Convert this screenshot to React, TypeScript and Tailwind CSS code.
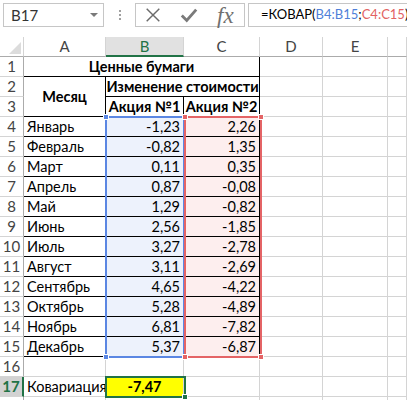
import clsx from "clsx";
import type { ReactNode } from "react";

const months = [
  "Январь",
  "Февраль",
  "Март",
  "Апрель",
  "Май",
  "Июнь",
  "Июль",
  "Август",
  "Сентябрь",
  "Октябрь",
  "Ноябрь",
  "Декабрь",
];

const stock1 = ["-1,23", "-0,82", "0,11", "0,87", "1,29", "2,56", "3,27", "3,11", "4,65", "5,28", "6,81", "5,37"];
const stock2 = ["2,26", "1,35", "0,35", "-0,08", "-0,82", "-1,85", "-2,78", "-2,69", "-4,22", "-4,89", "-7,82", "-6,87"];

type CellProps = {
  children?: ReactNode;
  className?: string;
  right?: "black" | "grid";
  bottom?: "black" | "grid";
};

function Cell({ children, className, right = "grid", bottom = "grid" }: CellProps) {
  return (
    <div
      className={clsx(
        "flex items-center whitespace-nowrap border-r border-b px-[3px] text-[14.5px] text-black",
        right === "black" ? "border-r-black" : "border-r-[#d4d4d4]",
        bottom === "black" ? "border-b-black" : "border-b-[#d4d4d4]",
        className
      )}
    >
      {children}
    </div>
  );
}

function RowHead({ n, active }: { n?: number; active?: boolean }) {
  return (
    <div
      className={clsx(
        "flex items-center justify-center border-b border-b-[#d4d4d4] text-[15px]",
        active
          ? "border-r-2 border-r-[#217346] bg-[#d2d2d2] font-bold text-[#217346]"
          : "border-r border-r-[#ababab] bg-white text-[#444]"
      )}
    >
      {n}
    </div>
  );
}

function ColHead({ label, active }: { label: string; active?: boolean }) {
  return (
    <div
      className={clsx(
        "flex items-center justify-center border-r border-r-[#d4d4d4] text-[15px]",
        active
          ? "border-b-2 border-b-[#217346] bg-[#e1e1e1] text-[#217346]"
          : "border-b border-b-[#ababab] bg-white text-[#444]"
      )}
    >
      {label}
    </div>
  );
}

function Tail() {
  return (
    <>
      <Cell />
      <Cell />
      <Cell />
    </>
  );
}

function Toolbar() {
  return (
    <div className="flex h-[37px] items-start bg-white pt-[3px]">
      <div className="ml-[3px] flex h-[24px] w-[101px] shrink-0 items-center justify-between border border-[#c6c6c6] pl-[7px] pr-[5px] text-[15px] text-[#333]">
        <span>B17</span>
        <span className="h-0 w-0 border-x-[4px] border-t-[4px] border-x-transparent border-t-[#7a7a7a]" />
      </div>
      <div className="flex h-[24px] w-[31px] shrink-0 flex-col items-center justify-center gap-[2px]">
        <span className="h-[2px] w-[2px] bg-[#a0a0a0]" />
        <span className="h-[2px] w-[2px] bg-[#a0a0a0]" />
        <span className="h-[2px] w-[2px] bg-[#a0a0a0]" />
      </div>
      <div className="flex h-[24px] w-[110px] shrink-0 items-center border border-[#c6c6c6]">
        <svg viewBox="0 0 20 20" className="ml-[8px] h-[18px] w-[18px]">
          <path d="M3 3L17 17M17 3L3 17" stroke="#6b6b6b" strokeWidth="1.6" />
        </svg>
        <svg viewBox="0 0 20 20" className="ml-[18px] h-[18px] w-[18px]">
          <path d="M2 10.5L7.5 16L18 4" stroke="#7a7a7a" strokeWidth="3.2" fill="none" />
        </svg>
        <span className="ml-[19px] text-[23px] italic leading-none text-[#707070] [font-family:'Liberation_Serif',serif]">
          fx
        </span>
      </div>
      <div className="ml-[3px] flex h-[24px] min-w-0 flex-1 items-center overflow-hidden whitespace-nowrap border border-r-0 border-[#c6c6c6] pl-[12px] text-[13px] text-black">
        <span>=КОВАР(</span>
        <span className="text-[#4f7fd9]">B4:B15</span>
        <span>;</span>
        <span className="text-[#e26262]">C4:C15</span>
        <span>)</span>
      </div>
    </div>
  );
}

export default function App() {
  return (
    <div className="relative h-[400px] w-[407px] overflow-hidden bg-white [font-family:Lato,'Noto_Sans',sans-serif]">
      <Toolbar />
      <div className="grid grid-cols-[24px_82px_78px_76px_63px_65px_19px] grid-rows-[repeat(19,20px)]">
        {/* column headers */}
        <div className="flex items-end justify-end border-r border-b border-r-[#d4d4d4] border-b-[#ababab] bg-white p-[2px]">
          <svg viewBox="0 0 12 12" className="h-[12px] w-[12px]">
            <path d="M12 0L12 12L0 12Z" fill="#dcdcdc" />
          </svg>
        </div>
        <ColHead label="A" />
        <ColHead label="B" active />
        <ColHead label="C" />
        <ColHead label="D" />
        <ColHead label="E" />
        <ColHead label="" />

        {/* row 1 */}
        <RowHead n={1} />
        <Cell className="col-span-3 justify-center font-bold" right="black" bottom="black">
          Ценные бумаги
        </Cell>
        <Tail />

        {/* row 2 */}
        <RowHead n={2} />
        <Cell className="row-span-2 justify-center font-bold" right="black" bottom="black">
          Месяц
        </Cell>
        <Cell className="col-span-2 justify-center font-bold" right="black" bottom="black">
          Изменение стоимости
        </Cell>
        <Tail />

        {/* row 3 */}
        <RowHead n={3} />
        <Cell className="justify-center font-bold" right="black" bottom="black">
          Акция №1
        </Cell>
        <Cell className="justify-center font-bold" right="black" bottom="black">
          Акция №2
        </Cell>
        <Tail />

        {months.map((m, i) => (
          <div key={m} className="contents">
            <RowHead n={i + 4} />
            <Cell right="black" bottom="black">
              {m}
            </Cell>
            <Cell className="justify-end bg-[#edf2fc]" right="black" bottom="black">
              {stock1[i]}
            </Cell>
            <Cell className="justify-end bg-[#fdeeee]" right="black" bottom="black">
              {stock2[i]}
            </Cell>
            <Tail />
          </div>
        ))}

        {/* row 16 */}
        <RowHead n={16} />
        <Cell />
        <Cell />
        <Cell />
        <Tail />

        {/* row 17 */}
        <RowHead n={17} active />
        <Cell>Ковариация</Cell>
        <Cell className="justify-center bg-[#ffff00] font-bold">-7,47</Cell>
        <Cell />
        <Tail />

        <RowHead />
        <Cell />
        <Cell />
        <Cell />
        <Tail />
      </div>

      {/* range highlight B4:B15 */}
      <div className="pointer-events-none absolute left-[105px] top-[116px] h-[242px] w-[80px] border-2 border-[#5b87e3]">
        <span className="absolute -left-[4px] -top-[4px] h-[6px] w-[6px] border border-white bg-[#5b87e3]" />
        <span className="absolute -bottom-[4px] -left-[4px] h-[6px] w-[6px] border border-white bg-[#5b87e3]" />
      </div>
      {/* range highlight C4:C15 */}
      <div className="pointer-events-none absolute left-[184px] top-[116px] h-[242px] w-[78px] border-2 border-[#e46466]">
        <span className="absolute -left-[4px] -top-[4px] h-[6px] w-[6px] border border-white bg-[#e46466]" />
        <span className="absolute -right-[4px] -top-[4px] h-[6px] w-[6px] border border-white bg-[#e46466]" />
        <span className="absolute -bottom-[4px] -left-[4px] h-[6px] w-[6px] border border-white bg-[#e46466]" />
        <span className="absolute -bottom-[4px] -right-[4px] h-[6px] w-[6px] border border-white bg-[#e46466]" />
      </div>
      {/* selection B17 */}
      <div className="pointer-events-none absolute left-[105px] top-[376px] h-[22px] w-[81px] border-2 border-[#217346]">
        <span className="absolute -bottom-[4px] -right-[4px] h-[6px] w-[6px] border border-white bg-[#217346]" />
      </div>
    </div>
  );
}
